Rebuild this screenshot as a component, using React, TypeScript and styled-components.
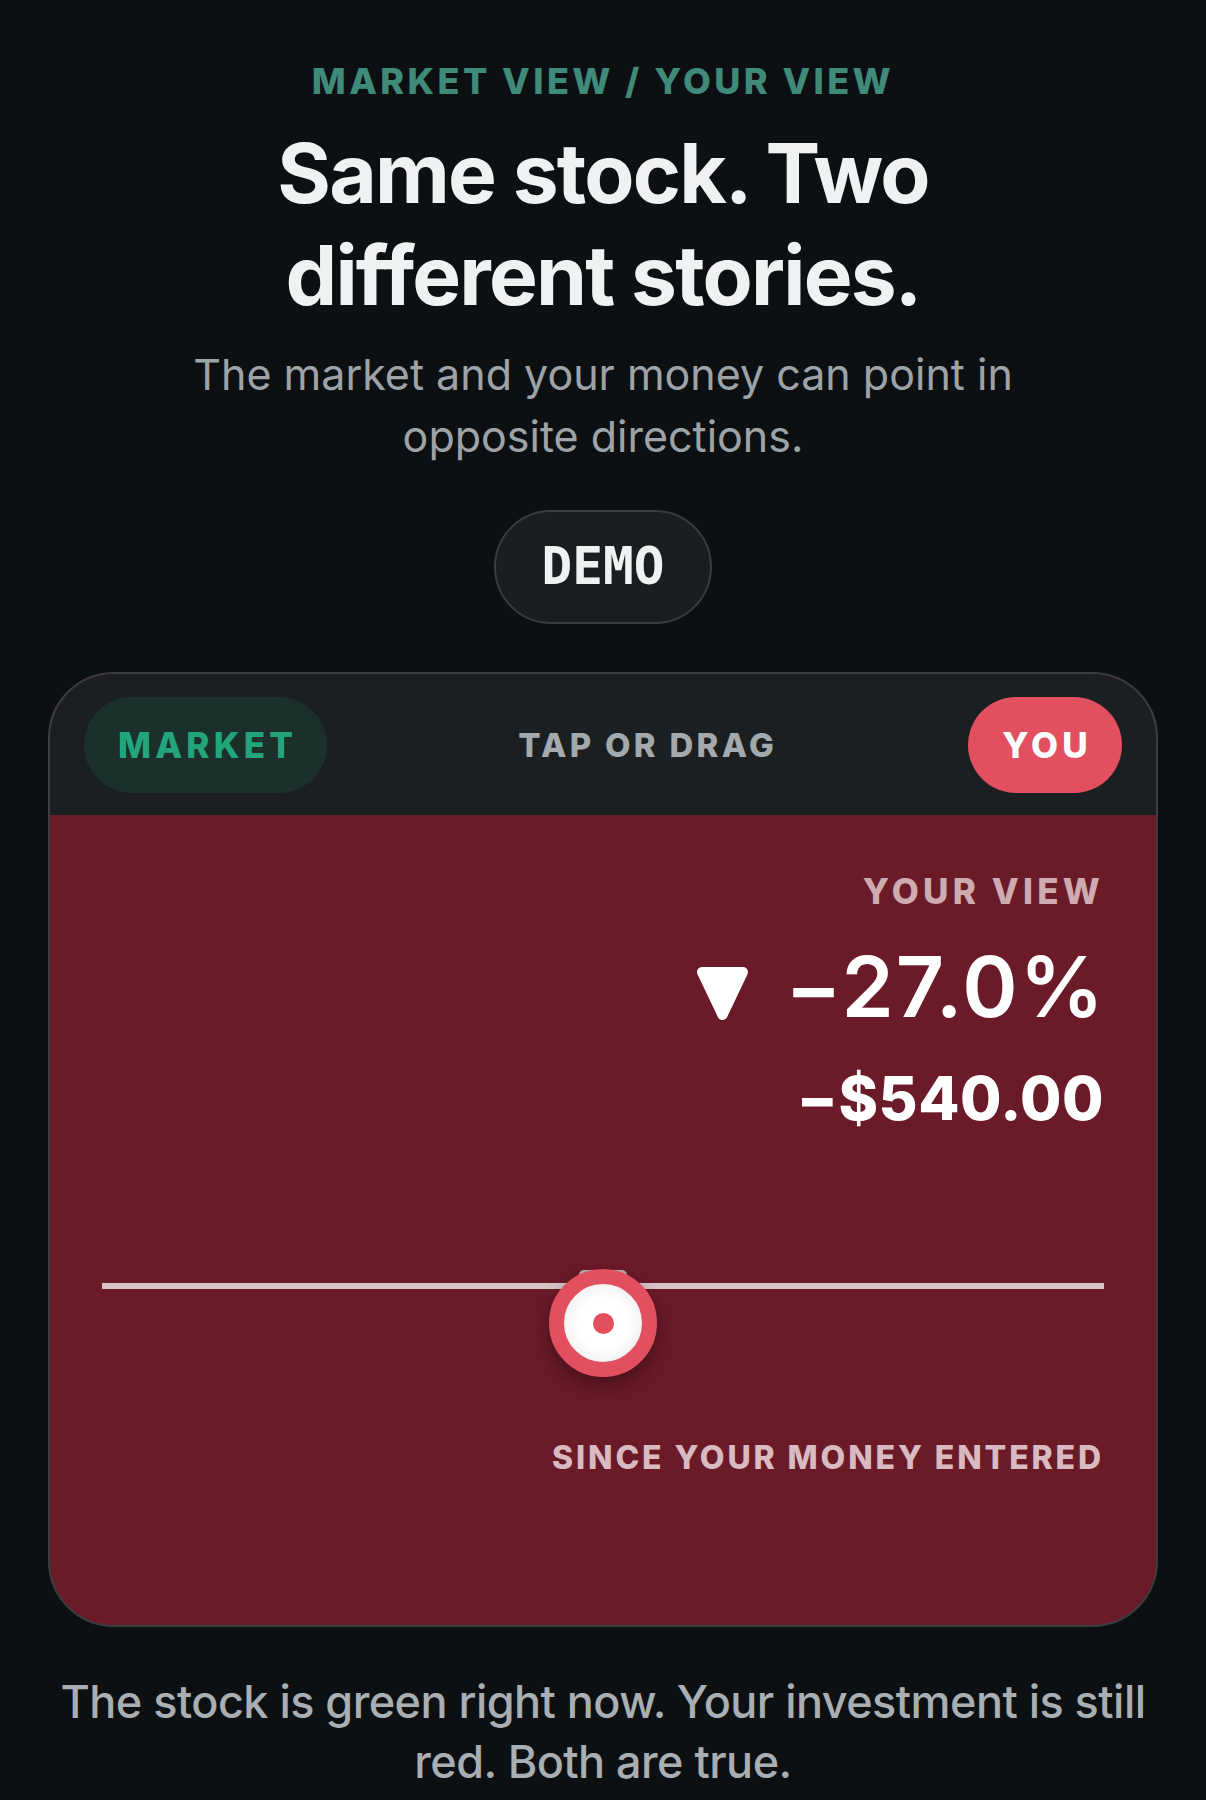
import * as React from "react";
import styled, { createGlobalStyle } from "styled-components";

const GlobalStyle = createGlobalStyle`
  html, body {
    margin: 0;
    padding: 0;
    background: #0c1012;
  }
  body {
    font-family: Inter, "Noto Sans", "Liberation Sans", sans-serif;
    -webkit-font-smoothing: antialiased;
  }
`;

const Page = styled.main`
  width: 1206px;
  min-height: 1800px;
  box-sizing: border-box;
  padding: 59px 48px 0;
  display: flex;
  flex-direction: column;
  align-items: center;
  background: #0c1012;
`;

const Eyebrow = styled.div`
  font-size: 36px;
  line-height: 44px;
  font-weight: 800;
  letter-spacing: 0.095em;
  color: #3f8a78;
  text-transform: uppercase;
`;

const Heading = styled.h1`
  margin: 20px 0 0;
  max-width: 760px;
  font-size: 82px;
  line-height: 102px;
  font-weight: 700;
  letter-spacing: -0.022em;
  color: #f0f2f2;
  text-align: center;
`;

const Subtitle = styled.p`
  margin: 16px 0 0;
  max-width: 880px;
  font-size: 43px;
  line-height: 62px;
  font-weight: 400;
  color: #9ea3a7;
  text-align: center;
`;

const DemoPill = styled.div`
  margin-top: 43px;
  padding: 31px 46px;
  border: 2px solid #3a3d3f;
  border-radius: 60px;
  background: #1b1e20;
  font-family: "DejaVu Sans Mono", "Liberation Mono", monospace;
  font-size: 51px;
  line-height: 48px;
  font-weight: 700;
  color: #f0f2f2;
`;

const Card = styled.section`
  margin-top: 48px;
  width: 100%;
  box-sizing: border-box;
  border: 2px solid #3a3e40;
  border-radius: 66px;
  overflow: hidden;
  background: #6b1a28;
`;

const CardHeader = styled.div`
  height: 141px;
  box-sizing: border-box;
  padding: 0 34px;
  display: flex;
  align-items: center;
  justify-content: space-between;
  background: #1c1f21;
`;

const Chip = styled.div<{ $tone: "market" | "you" }>`
  height: 96px;
  box-sizing: border-box;
  padding: 0 30px 0 34px;
  display: flex;
  align-items: center;
  border-radius: 48px;
  font-size: 35px;
  font-weight: 800;
  letter-spacing: 0.12em;
  background: ${(p) => (p.$tone === "market" ? "#1c302b" : "#e25060")};
  color: ${(p) => (p.$tone === "market" ? "#22a57a" : "#ffffff")};
`;

const Hint = styled.div`
  font-size: 33px;
  font-weight: 800;
  letter-spacing: 0.1em;
  color: #a3a9ad;
`;

const CardBody = styled.div`
  padding: 54px 52px 145px;
  display: flex;
  flex-direction: column;
  align-items: flex-end;
`;

const Label = styled.div`
  font-size: 35px;
  line-height: 44px;
  font-weight: 800;
  letter-spacing: 0.12em;
  color: #ceabb1;
`;

const PercentRow = styled.div`
  margin-top: 24px;
  display: flex;
  align-items: center;
  gap: 36px;
`;

const Percent = styled.div`
  font-size: 84px;
  line-height: 100px;
  font-weight: 600;
  letter-spacing: 2px;
  margin-right: -2px;
  color: #ffffff;
`;

const Amount = styled.div`
  margin-top: 26px;
  font-size: 60px;
  line-height: 70px;
  font-weight: 800;
  letter-spacing: 0.5px;
  color: #ffffff;
`;

const Slider = styled.div`
  position: relative;
  align-self: stretch;
  margin-top: 110px;
  height: 140px;
  padding-top: 40px;
  box-sizing: border-box;
`;

const Track = styled.div`
  height: 6px;
  background: #d8c4c8;
`;

const Marker = styled.div`
  position: absolute;
  left: 50%;
  top: 27px;
  width: 48px;
  height: 20px;
  margin-left: -24px;
  border-radius: 5px 5px 0 0;
  background: #b9b1b3;
`;

const Thumb = styled.div`
  position: absolute;
  left: 50%;
  top: 26px;
  width: 108px;
  height: 108px;
  margin-left: -54px;
  box-sizing: border-box;
  border-radius: 50%;
  border: 15px solid #e25060;
  background: radial-gradient(circle, #ffffff 45%, #e4e4e4 100%);
  box-shadow: 0 8px 18px rgba(0, 0, 0, 0.35);
  display: flex;
  align-items: center;
  justify-content: center;
`;

const ThumbDot = styled.div`
  width: 21px;
  height: 21px;
  border-radius: 50%;
  background: #e25060;
`;

const Caption = styled(Label)`
  margin-top: 53px;
  font-size: 32px;
  letter-spacing: 0.09em;
  color: #d8bac0;
`;

const Footer = styled.p`
  margin: 45px -12px 0;
  font-size: 45px;
  line-height: 60px;
  font-weight: 500;
  letter-spacing: -0.012em;
  color: #a9aeb2;
  text-align: center;
`;

const DownTriangle = () => (
  <svg width="53" height="55" viewBox="0 0 53 55" style={{ marginTop: 12 }}>
    <polygon
      points="6,6 47,6 26.5,49"
      fill="#ffffff"
      stroke="#ffffff"
      strokeWidth="10"
      strokeLinejoin="round"
    />
  </svg>
);

const App = () => {
  return (
    <>
      <GlobalStyle />
      <Page>
        <Eyebrow>Market view / Your view</Eyebrow>
        <Heading>Same stock. Two different stories.</Heading>
        <Subtitle>The market and your money can point in opposite directions.</Subtitle>
        <DemoPill>DEMO</DemoPill>
        <Card>
          <CardHeader>
            <Chip $tone="market">MARKET</Chip>
            <Hint>TAP OR DRAG</Hint>
            <Chip $tone="you">YOU</Chip>
          </CardHeader>
          <CardBody>
            <Label>YOUR VIEW</Label>
            <PercentRow>
              <DownTriangle />
              <Percent>−27.0%</Percent>
            </PercentRow>
            <Amount>−$540.00</Amount>
            <Slider>
              <Track />
              <Marker />
              <Thumb>
                <ThumbDot />
              </Thumb>
            </Slider>
            <Caption>SINCE YOUR MONEY ENTERED</Caption>
          </CardBody>
        </Card>
        <Footer>The stock is green right now. Your investment is still red. Both are true.</Footer>
      </Page>
    </>
  );
};

export default App;
